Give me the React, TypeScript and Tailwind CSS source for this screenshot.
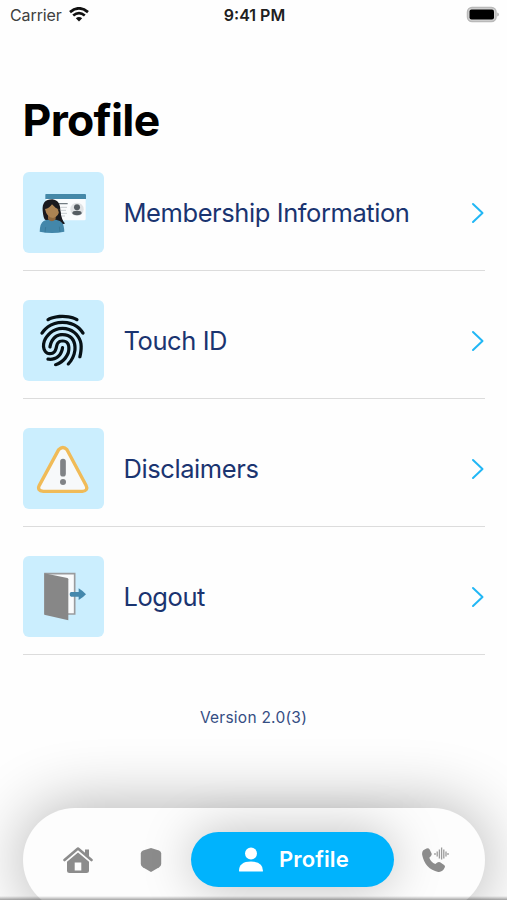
import type { ReactNode } from "react";
import { IoMdFingerPrint } from "react-icons/io";

function MembershipIcon() {
	return (
		<svg className="h-full w-full" viewBox="24 21 243 243">
			<path d="M93 102h119v60a4 4 0 01-4 4H93z" fill="#fafcfd" />
			<path d="M93 87h117q3 0 3 3v12H91V89q0-2 2-2z" fill="#4488a8" />
			<path d="M130 116h28" stroke="#737d83" strokeWidth="4" />
			<path d="M136 127h20M136 136h17M136 145h20M136 153h14" stroke="#c8cdd0" strokeWidth="3" />
			<circle cx="186" cy="133" r="20" fill="#e0e3e5" />
			<circle cx="186" cy="127" r="9" fill="#555d62" />
			<ellipse cx="186" cy="144" rx="14" ry="6.500" fill="#555d62" />
			<path d="M83 137q-3-34 29-34 26 3 24 40 3 24 13 33-14 3-26-3l-33-9q-5-5-7-27z" fill="#19191e" />
			<path d="M74 200q1-26 12-32 7-4 15-4h22q14 3 19 10 5 6 6 26-37 8-74 0z" fill="#4387aa" />
			<path d="M99 149h23v14q-11 12-23 0z" fill="#8f683f" />
			<path d="M90 132q13-2 21-14 9 12 22 15-1 23-19 26-19-2-24-27z" fill="#ac8353" />
			<path d="M123 122q13 22 10 40l11 14q7 1 5-2-11-13-12-34z" fill="#19191e" />
			<path d="M92 186l-2 16M133 185l2 16" stroke="#34718f" strokeWidth="2" />
		</svg>
	);
}

function FingerprintIcon() {
	return <IoMdFingerPrint className="mr-px h-[59px] w-[59px] -scale-x-100 text-[#071116]" />;
}

function WarningIcon() {
	return (
		<svg className="h-full w-full" viewBox="24 21 243 243">
			<path
				d="M131 86q13-13 25 0l57 107q8 16-11 18H85q-20-2-12-18z"
				fill="#f7f9fa"
				stroke="#f0bb58"
				strokeWidth="10"
				strokeLinejoin="round"
			/>
			<path d="M144 122v36" stroke="#808386" strokeWidth="17" strokeLinecap="round" />
			<circle cx="144" cy="183" r="9" fill="#808386" />
		</svg>
	);
}

function LogoutIcon() {
	return (
		<svg className="h-full w-full" viewBox="24 21 243 243">
			<path d="M90 74h89v121H90z" fill="#f9fbfc" stroke="#9a9c9e" strokeWidth="5" />
			<path d="M88 73l69 14q3 1 3 4v123l-69-16q-3-1-3-4z" fill="#878787" />
			<path d="M168 129h23v-11q13 8 22 18-9 10-22 17v-10h-23q-4-1-4-7 0-6 4-7z" fill="#4488ac" />
		</svg>
	);
}

const items: { label: string; icon: ReactNode }[] = [
	{ label: "Membership Information", icon: <MembershipIcon /> },
	{ label: "Touch ID", icon: <FingerprintIcon /> },
	{ label: "Disclaimers", icon: <WarningIcon /> },
	{ label: "Logout", icon: <LogoutIcon /> },
];

function StatusBar() {
	return (
		<header className="grid h-[29px] grid-cols-3 items-center pr-[8px] pl-[10px] text-[#404040]">
			<div className="flex items-center gap-[7px]">
				<span className="text-[16px] tracking-[-0.1px]">Carrier</span>
				<svg className="h-[15px] w-5" viewBox="0 0 20 15" fill="none" stroke="#111" strokeWidth="2.700">
					<path d="M1 5.100Q10-2.500 19 5.100M4.200 8.500q5.800-4.800 11.600 0" />
					<path d="M6.800 11.300q3.200-2.600 6.400 0L10 14.600z" fill="#111" stroke="none" />
				</svg>
			</div>
			<span className="text-center text-[16px] font-semibold text-[#202020]">9:41 PM</span>
			<svg className="h-[17px] w-[33px] justify-self-end" viewBox="0 0 33 17">
				<rect x="1.500" y="1.500" width="28.500" height="14" rx="4.500" fill="#d4d4d4" stroke="#b9b9b9" strokeWidth="1.500" />
				<rect x="3.500" y="3.500" width="24.500" height="10" rx="2" fill="#000" />
				<path d="M31.200 6.500q1.800.5 1.800 2t-1.800 2z" fill="#b9b9b9" />
			</svg>
		</header>
	);
}

function TabBar() {
	return (
		<nav className="mx-[22.500px] mt-auto h-[92px] shrink-0">
			<div className="flex h-[104px] items-center rounded-full bg-[#fdfdfd] pb-px text-[#8c8c8c] shadow-[0_0_66px_rgba(0,0,0,0.32)]">
				<svg className="ml-[40px] h-[28px] w-[30px]" viewBox="0 0 30 28">
					<path d="M1.500 14L15 2.500 28.500 14" fill="none" stroke="currentColor" strokeWidth="2.600" strokeLinecap="round" strokeLinejoin="round" />
					<path d="M22 3.500h4v8l-4-3.500z" fill="currentColor" />
					<path d="M15 6.500l11 9.300V25q0 2-2.500 2h-17Q4 27 4 25v-9.200zM11.700 16.500v8h6.600v-8z" fill="currentColor" fillRule="evenodd" />
				</svg>
				<svg className="ml-[47.500px] h-[26px] w-[22px]" viewBox="0 0 22 26">
					<path d="M11 1l8 2.500q2.200.8 2.200 3v10.500q0 2-2 3.200L11 25l-8.200-4.800q-2-1.200-2-3.200V6.500q0-2.200 2.200-3z" fill="currentColor" />
				</svg>
				<div className="ml-[28.500px] flex h-[55px] w-[203px] items-center rounded-full bg-[#00b3fd] pl-[48px] text-white shadow-[0_0_50px_rgba(0,0,0,0.25)]">
					<svg className="h-[25px] w-6" viewBox="0 0 24 25" fill="currentColor">
						<circle cx="12" cy="6.500" r="6" />
						<path d="M0 24q0-9.500 12-9.500T24 24q0 .5-1 .5H1q-1 0-1-.5z" />
					</svg>
					<span className="ml-[16.500px] text-[22px] font-semibold tracking-[0.1px]">Profile</span>
				</div>
				<svg className="ml-[28.500px] h-[26px] w-[28px]" viewBox="0 0 28 26">
					<path d="M1.300 3.300L4.500 1.500q2-.8 3 .8l2 4q.6 1.600-.5 2.700L7.300 10.700q1.500 4.300 6 6.300l2-1.500q1.400-1.100 2.800-.2l4 2.700q1.400 1.100.6 2.600-2.200 4.900-6.500 4.300Q3 22 .2 8-.3 4.800 1.300 3.300z" fill="currentColor" />
					<path d="M13 6v2M15.200 4.500v5M17.400 2.500v9M19.600 0.500v12M21.800 2.500v9M24 4.500v5M26 6v2" stroke="#9b9b9b" strokeWidth="1.300" />
				</svg>
			</div>
		</nav>
	);
}

export default function App() {
	return (
		<div className="relative flex h-[900px] w-[507px] flex-col overflow-hidden bg-[#fefefe] font-['Inter','Liberation_Sans',sans-serif]">
			<StatusBar />
			<h1 className="mt-[65px] ml-[22.500px] text-[44.500px] leading-[52px] font-bold tracking-[-0.7px] text-black">Profile</h1>
			<ul className="mx-[22.500px] mt-[26px] flex flex-col gap-[29px]">
				{items.map((item) => (
					<li key={item.label} className="flex h-[99px] items-start border-b border-[#dcdcdc]">
						<div className="flex h-[81px] w-[81px] items-center justify-center overflow-hidden rounded-md bg-[#cbeefe]">
							{item.icon}
						</div>
						<div className="flex h-[81px] flex-1 items-center justify-between pl-[20px]">
							<span className="pt-0.5 text-[25.500px] tracking-[-0.42px] text-[#1a3470]">{item.label}</span>
							<svg className="h-[22px] w-[14px]" viewBox="0 0 14 22" fill="none" stroke="#22b7f5" strokeWidth="2">
								<path d="M2 2l9.500 9L2 20" strokeLinecap="round" strokeLinejoin="round" />
							</svg>
						</div>
					</li>
				))}
			</ul>
			<p className="mt-[51px] text-center text-[15.500px] leading-6 tracking-[0.25px] text-[#354d83]">Version 2.0(3)</p>
			<TabBar />
			<div className="absolute inset-x-0 bottom-0 h-1 bg-linear-to-b from-transparent to-black/35" />
		</div>
	);
}
